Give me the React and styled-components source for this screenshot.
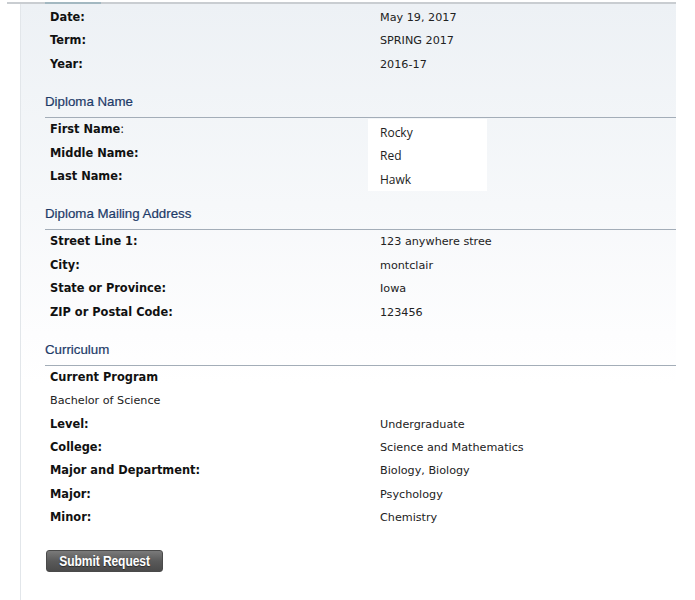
import React from "react";
import styled, { createGlobalStyle } from "styled-components";

const Global = createGlobalStyle`
  html, body { margin: 0; padding: 0; background: #fff; }
  body { font-family: "DejaVu Sans", Verdana, sans-serif; }
`;

const Frame = styled.div`
  position: relative;
  margin: 2px 0 0 7px;
  width: 669px;
  border-top: 2px solid #c9cdd1;
  &::before {
    content: "";
    position: absolute;
    left: 38px;
    top: -2px;
    width: 56px;
    height: 2px;
    background: #a3b8c1;
  }
`;

const Panel = styled.div`
  margin-left: 13px;
  border-left: 1px solid #e2e6ea;
  padding: 2px 0 28px 24px;
  background: linear-gradient(to bottom, #edf1f5 0px, #f6f8fa 200px, #fdfdfe 330px, #ffffff 380px);
`;

const Heading = styled.div`
  margin-top: 18px;
  padding-bottom: 7px;
  border-bottom: 1px solid #a3adb8;
  font-family: "Liberation Sans", Arial, sans-serif;
  font-size: 13.3px;
  line-height: 16px;
  color: #1d3a68;
  -webkit-text-stroke: 0.2px #1d3a68;
`;

const Grid = styled.div`
  display: grid;
  grid-template-columns: 335px 1fr;
`;

const Label = styled.div`
  padding-left: 5px;
  height: 23.4px;
  line-height: 23.4px;
  font-size: 11.4px;
  font-weight: bold;
  color: #111;
  white-space: nowrap;
  grid-column: ${(p) => (p.$full ? "1 / -1" : "auto")};
`;

const Value = styled.div`
  height: 23.4px;
  line-height: 23.4px;
  font-size: 11.2px;
  color: #222;
  white-space: nowrap;
  grid-column: ${(p) => (p.$full ? "1 / -1" : "auto")};
  padding-left: ${(p) => (p.$full ? "5px" : "0")};
`;

const NameGrid = styled.div`
  display: grid;
  grid-template-columns: 323px 119px;
  grid-template-rows: repeat(3, 23.4px);
`;

const NameBox = styled.div`
  grid-column: 2;
  grid-row: 1 / 4;
  background: #fff;
  padding: 2px 0 0 12px;
  margin-top: 1px;
  height: 72px;
  box-sizing: border-box;
`;

const NameValue = styled.div`
  height: 23.2px;
  line-height: 23.2px;
  font-family: "Open Sans", "Liberation Sans", sans-serif;
  font-size: 12px;
  color: #222;
`;

const Colon = styled.span`
  font-weight: normal;
`;

const Submit = styled.button`
  display: block;
  margin: 20px 0 0 1px;
  width: 117px;
  height: 22px;
  padding: 0;
  border: 1px solid #4a4a4a;
  border-radius: 3px;
  background: linear-gradient(to bottom, #7a7a7a, #5a5a5a 50%, #4b4b4b);
  color: #fff;
  font-family: "Liberation Sans", Arial, sans-serif;
  font-weight: bold;
  font-size: 14px;
  line-height: 20px;
  text-shadow: 0 1px 1px rgba(0, 0, 0, 0.5);
  cursor: pointer;
`;

const SubmitText = styled.span`
  display: inline-block;
  transform: scaleX(0.86);
  letter-spacing: -0.1px;
`;

const Row = ({ label, value }) => (
  <>
    <Label>{label}</Label>
    <Value>{value}</Value>
  </>
);

export default function App() {
  return (
    <>
      <Global />
      <Frame>
        <Panel>
          <Grid>
            <Row label="Date:" value="May 19, 2017" />
            <Row label="Term:" value="SPRING 2017" />
            <Row label="Year:" value="2016-17" />
          </Grid>

          <Heading>Diploma Name</Heading>
          <NameGrid>
            <Label>
              First Name<Colon>:</Colon>
            </Label>
            <NameBox>
              <NameValue>Rocky</NameValue>
              <NameValue>Red</NameValue>
              <NameValue>Hawk</NameValue>
            </NameBox>
            <Label>Middle Name:</Label>
            <Label>Last Name:</Label>
          </NameGrid>

          <Heading>Diploma Mailing Address</Heading>
          <Grid>
            <Row label="Street Line 1:" value="123 anywhere stree" />
            <Row label="City:" value="montclair" />
            <Row label="State or Province:" value="Iowa" />
            <Row label="ZIP or Postal Code:" value="123456" />
          </Grid>

          <Heading>Curriculum</Heading>
          <Grid>
            <Label $full>Current Program</Label>
            <Value $full>Bachelor of Science</Value>
            <Row label="Level:" value="Undergraduate" />
            <Row label="College:" value="Science and Mathematics" />
            <Row label="Major and Department:" value="Biology, Biology" />
            <Row label="Major:" value="Psychology" />
            <Row label="Minor:" value="Chemistry" />
          </Grid>

          <Submit type="button">
            <SubmitText>Submit Request</SubmitText>
          </Submit>
        </Panel>
      </Frame>
    </>
  );
}
